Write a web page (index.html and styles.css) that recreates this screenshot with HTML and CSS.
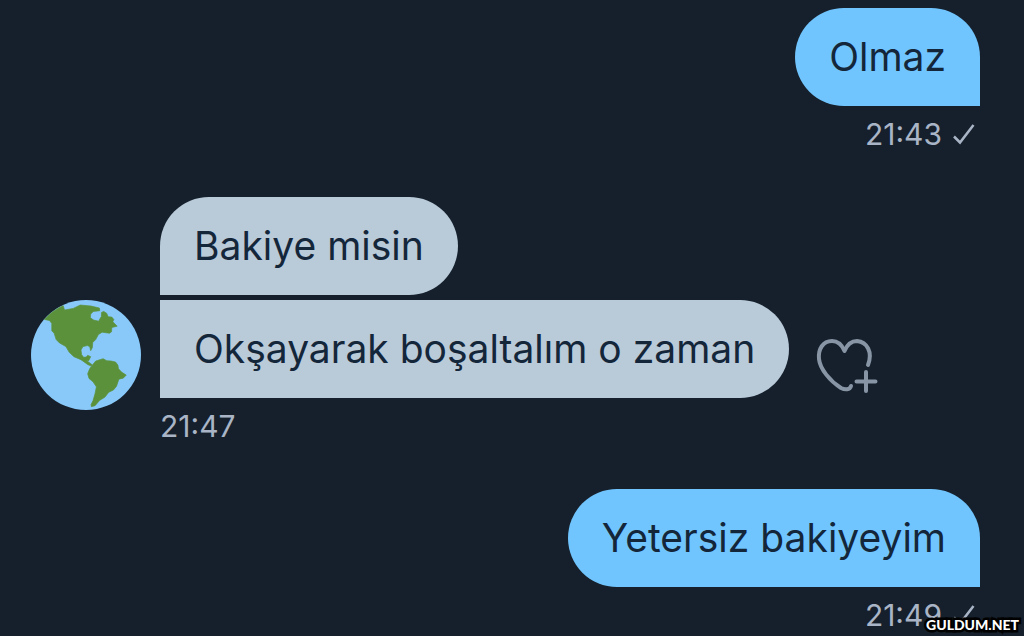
FILE: index.html
```
<!DOCTYPE html>
<html lang="tr">
<head>
  <meta charset="UTF-8" />
  <meta name="viewport" content="width=device-width, initial-scale=1.0"/>
  <title>Mesajlar</title>
  <link rel="stylesheet" href="styles.css">
</head>
<body>

  <main class="chat">
    <section class="group sent">
      <p class="bubble">Olmaz</p>
      <div class="meta">
        <time>21:43</time>
        <svg class="check" viewBox="0 0 24 24" aria-hidden="true"><path d="M2 14.5 L8 20.5 L21.5 3"/></svg>
      </div>
    </section>

    <section class="group received">
      <p class="bubble">Bakiye misin</p>
      <svg class="avatar" viewBox="34 31 328 328" aria-hidden="true">
        <circle class="sea" cx="198" cy="195" r="164"/>
        <path class="land" d="M74 89 Q98 62 130 48 L134 61 L160 56 L181 46 L213 49 L238 55 L239 63 L220 65 L212 73 L211 84 L221 91 L236 94 L240 86 L244 80 L244 68 L251 65 L260 71 L264 81 L275 82 L281 89 L278 96 L291 109 L275 113 L274 126 L268 130 L246 127 L235 134 L227 149 L218 158 L217 173 L212 182 L209 170 L202 167 L189 170 L183 180 L185 194 L191 202 L199 201 L203 196 L212 200 L206 212 L199 211 L216 224 L214 228 L204 224 L183 209 L162 200 L148 187 L138 170 L119 159 L109 149 L103 130 L96 123 L96 101 L89 92 Z"/>
        <path class="land" d="M216 226 L227 213 L249 206 L260 212 L273 213 L286 216 L293 225 L295 236 L304 246 L318 255 L309 264 L296 267 L289 288 L280 299 L266 306 L254 321 L239 330 L225 346 L214 349 L213 343 L219 331 L225 310 L229 290 L219 275 L207 265 L203 251 L209 236 Z"/>
      </svg>
      <div class="row">
        <p class="bubble">Okşayarak boşaltalım o zaman</p>
        <button class="react" type="button" aria-label="Tepki ekle">
          <svg viewBox="0 0 64 64" aria-hidden="true">
            <path d="M52 31 C57 18 51 8 41 7 C35 7 31 11 28.5 17 C26 11 22 7 16 7 C7 7 2 15 3 25 C4 35 14 47 25 54 C29 56 34 56 35 52"/>
            <path d="M50 38 V57 M40.5 47.5 H59.5"/>
          </svg>
        </button>
      </div>
      <div class="meta">
        <time>21:47</time>
      </div>
    </section>

    <section class="group sent">
      <p class="bubble">Yetersiz bakiyeyim</p>
      <div class="meta">
        <time>21:49</time>
        <svg class="check" viewBox="0 0 24 24" aria-hidden="true"><path d="M2 14.5 L8 20.5 L21.5 3"/></svg>
      </div>
    </section>
  </main>

  <div class="watermark">GULDUM.NET</div>

</body>
</html>
```
FILE: styles.css
```
* {
  box-sizing: border-box;
}

body {
  margin: 0;
  background: #16202c;
  color: #a9b5c6;
  font-family: Inter, "Liberation Sans", sans-serif;
}

.chat {
  display: flex;
  flex-direction: column;
  gap: 45px;
  padding: 8px 44px 0 31px;
}

.bubble {
  margin: 0;
  padding: 25px 34px;
  font-size: 39px;
  line-height: 48px;
  color: #14263a;
}

.meta {
  display: flex;
  align-items: center;
  gap: 10px;
  margin-top: 10px;
  font-size: 30px;
  line-height: 36px;
}

/* outgoing messages */
.sent {
  display: flex;
  flex-direction: column;
  align-items: flex-end;
}

.sent .bubble {
  background: #70c5ff;
  border-radius: 49px 49px 0 49px;
}

.sent .meta {
  padding-right: 4px;
}

/* incoming messages */
.received {
  display: grid;
  grid-template-columns: 110px 1fr;
  column-gap: 19px;
  justify-items: start;
}

.received .bubble {
  grid-column: 2;
  background: #b9cad9;
  border-radius: 49px 49px 49px 0;
}

.received .row .bubble {
  border-radius: 0 49px 49px 0;
}

.row {
  grid-column: 2;
  grid-row: 2;
  display: flex;
  align-items: flex-end;
  gap: 27px;
  margin-top: 5px;
}

.received .meta {
  grid-column: 2;
  grid-row: 3;
}

.avatar {
  grid-column: 1;
  grid-row: 2 / span 2;
  width: 110px;
  height: 110px;
  margin-top: 5px;
}

.sea { fill: #88c9f9; }
.land { fill: #5c913b; stroke: #5c913b; stroke-width: 2; stroke-linejoin: round; }

.check {
  width: 24px;
  height: 24px;
  fill: none;
  stroke: #a9b5c6;
  stroke-width: 2.5;
}

.react {
  width: 64px;
  height: 64px;
  padding: 0;
  border: none;
  background: none;
  cursor: pointer;
}

.react svg {
  display: block;
  fill: none;
  stroke: #8795a5;
  stroke-width: 4;
  stroke-linecap: round;
  stroke-linejoin: round;
}

/* site stamp over the corner of the chat */
.watermark {
  position: absolute;
  right: 5px;
  bottom: 1px;
  font-family: Lato, sans-serif;
  font-size: 14px;
  font-weight: 900;
  line-height: 20px;
  color: #fff;
  -webkit-text-stroke: 5px #000;
  paint-order: stroke fill;
}
```
